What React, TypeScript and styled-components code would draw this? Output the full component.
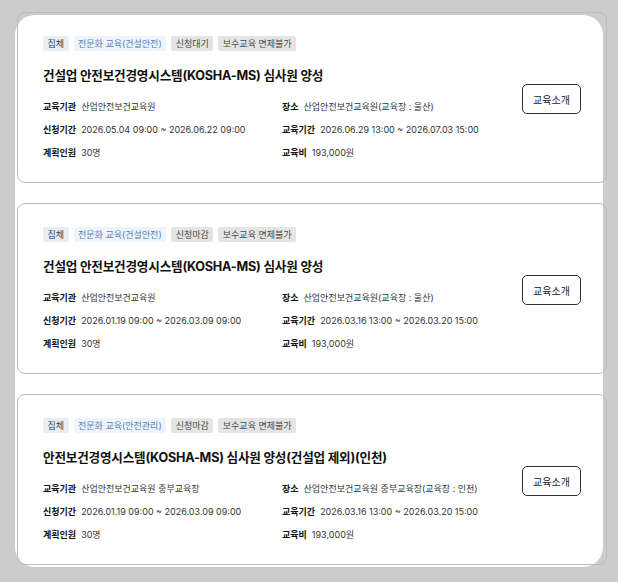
import React from "react";
import styled, { createGlobalStyle } from "styled-components";

const GlobalStyle = createGlobalStyle`
  html, body {
    margin: 0;
    padding: 0;
    background: #cccccc;
  }
  * {
    box-sizing: border-box;
  }
  body {
    font-family: Inter, "Noto Sans CJK KR", sans-serif;
    color: #222;
  }
`;

const Panel = styled.div`
  margin: 15px;
  width: 588px;
  height: 552px;
  background: #ffffff;
  border-radius: 20px;
  display: flex;
  flex-direction: column;
  gap: 20px;
`;

const Card = styled.div`
  margin: 0 -4px 0 2px;
  height: 171px;
  border: 1px solid #bbbbbb;
  border-radius: 8px;
  display: flex;
  align-items: center;
  padding: 0 25px;

  &:first-child {
    margin-top: -3px;
  }
`;

const Body = styled.div`
  flex: 1;
  display: flex;
  flex-direction: column;
`;

const Tags = styled.div`
  display: flex;
  gap: 5px;
`;

type TagKind = "plain" | "blue" | "gray";

const tagColors: Record<TagKind, { bg: string; fg: string }> = {
  plain: { bg: "#e8edf2", fg: "#2e3a48" },
  blue: { bg: "#edf4fd", fg: "#5b7fae" },
  gray: { bg: "#e4e4e4", fg: "#4a4a4a" },
};

const Tag = styled.span<{ $kind: TagKind }>`
  display: inline-flex;
  align-items: center;
  height: 15px;
  padding: 0 4.5px;
  border-radius: 2px;
  font-size: 9px;
  background: ${(p) => tagColors[p.$kind].bg};
  color: ${(p) => tagColors[p.$kind].fg};
`;

const Title = styled.h3`
  margin: 16px 0 15px;
  font-size: 12.6px;
  font-weight: 700;
  color: #111;
  line-height: 18px;
  letter-spacing: -0.2px;
`;

const Info = styled.div`
  display: grid;
  grid-template-columns: 239px 1fr;
  row-gap: 9px;
`;

const Item = styled.div`
  display: flex;
  align-items: center;
  gap: 5px;
  font-size: 9px;
  line-height: 14px;
  white-space: nowrap;
`;

const Label = styled.span`
  font-weight: 700;
  color: #111;
`;

const Value = styled.span`
  color: #333;
`;

const IntroButton = styled.button`
  width: 59px;
  height: 30px;
  border: 1px solid #333;
  border-radius: 5px;
  background: #fff;
  font-family: inherit;
  font-size: 10px;
  color: #222;
  cursor: pointer;
  margin-top: 3px;
`;

type Course = {
  tags: { text: string; kind: TagKind }[];
  title: string;
  org: string;
  place: string;
  apply: string;
  period: string;
  seats: string;
  fee: string;
};

const courses: Course[] = [
  {
    tags: [
      { text: "집체", kind: "plain" },
      { text: "전문화 교육(건설안전)", kind: "blue" },
      { text: "신청대기", kind: "gray" },
      { text: "보수교육 면제불가", kind: "gray" },
    ],
    title: "건설업 안전보건경영시스템(KOSHA-MS) 심사원 양성",
    org: "산업안전보건교육원",
    place: "산업안전보건교육원(교육장 : 울산)",
    apply: "2026.05.04 09:00 ~ 2026.06.22 09:00",
    period: "2026.06.29 13:00 ~ 2026.07.03 15:00",
    seats: "30명",
    fee: "193,000원",
  },
  {
    tags: [
      { text: "집체", kind: "plain" },
      { text: "전문화 교육(건설안전)", kind: "blue" },
      { text: "신청마감", kind: "gray" },
      { text: "보수교육 면제불가", kind: "gray" },
    ],
    title: "건설업 안전보건경영시스템(KOSHA-MS) 심사원 양성",
    org: "산업안전보건교육원",
    place: "산업안전보건교육원(교육장 : 울산)",
    apply: "2026.01.19 09:00 ~ 2026.03.09 09:00",
    period: "2026.03.16 13:00 ~ 2026.03.20 15:00",
    seats: "30명",
    fee: "193,000원",
  },
  {
    tags: [
      { text: "집체", kind: "plain" },
      { text: "전문화 교육(안전관리)", kind: "blue" },
      { text: "신청마감", kind: "gray" },
      { text: "보수교육 면제불가", kind: "gray" },
    ],
    title: "안전보건경영시스템(KOSHA-MS) 심사원 양성(건설업 제외)(인천)",
    org: "산업안전보건교육원 중부교육장",
    place: "산업안전보건교육원 중부교육장(교육장 : 인천)",
    apply: "2026.01.19 09:00 ~ 2026.03.09 09:00",
    period: "2026.03.16 13:00 ~ 2026.03.20 15:00",
    seats: "30명",
    fee: "193,000원",
  },
];

const CourseCard = ({ c }: { c: Course }) => (
  <Card>
    <Body>
      <Tags>
        {c.tags.map((t) => (
          <Tag key={t.text} $kind={t.kind}>
            {t.text}
          </Tag>
        ))}
      </Tags>
      <Title>{c.title}</Title>
      <Info>
        <Item>
          <Label>교육기관</Label>
          <Value>{c.org}</Value>
        </Item>
        <Item>
          <Label>장소</Label>
          <Value>{c.place}</Value>
        </Item>
        <Item>
          <Label>신청기간</Label>
          <Value>{c.apply}</Value>
        </Item>
        <Item>
          <Label>교육기간</Label>
          <Value>{c.period}</Value>
        </Item>
        <Item>
          <Label>계획인원</Label>
          <Value>{c.seats}</Value>
        </Item>
        <Item>
          <Label>교육비</Label>
          <Value>{c.fee}</Value>
        </Item>
      </Info>
    </Body>
    <IntroButton type="button">교육소개</IntroButton>
  </Card>
);

const App = () => (
  <>
    <GlobalStyle />
    <Panel>
      {courses.map((c, i) => (
        <CourseCard key={i} c={c} />
      ))}
    </Panel>
  </>
);

export default App;
